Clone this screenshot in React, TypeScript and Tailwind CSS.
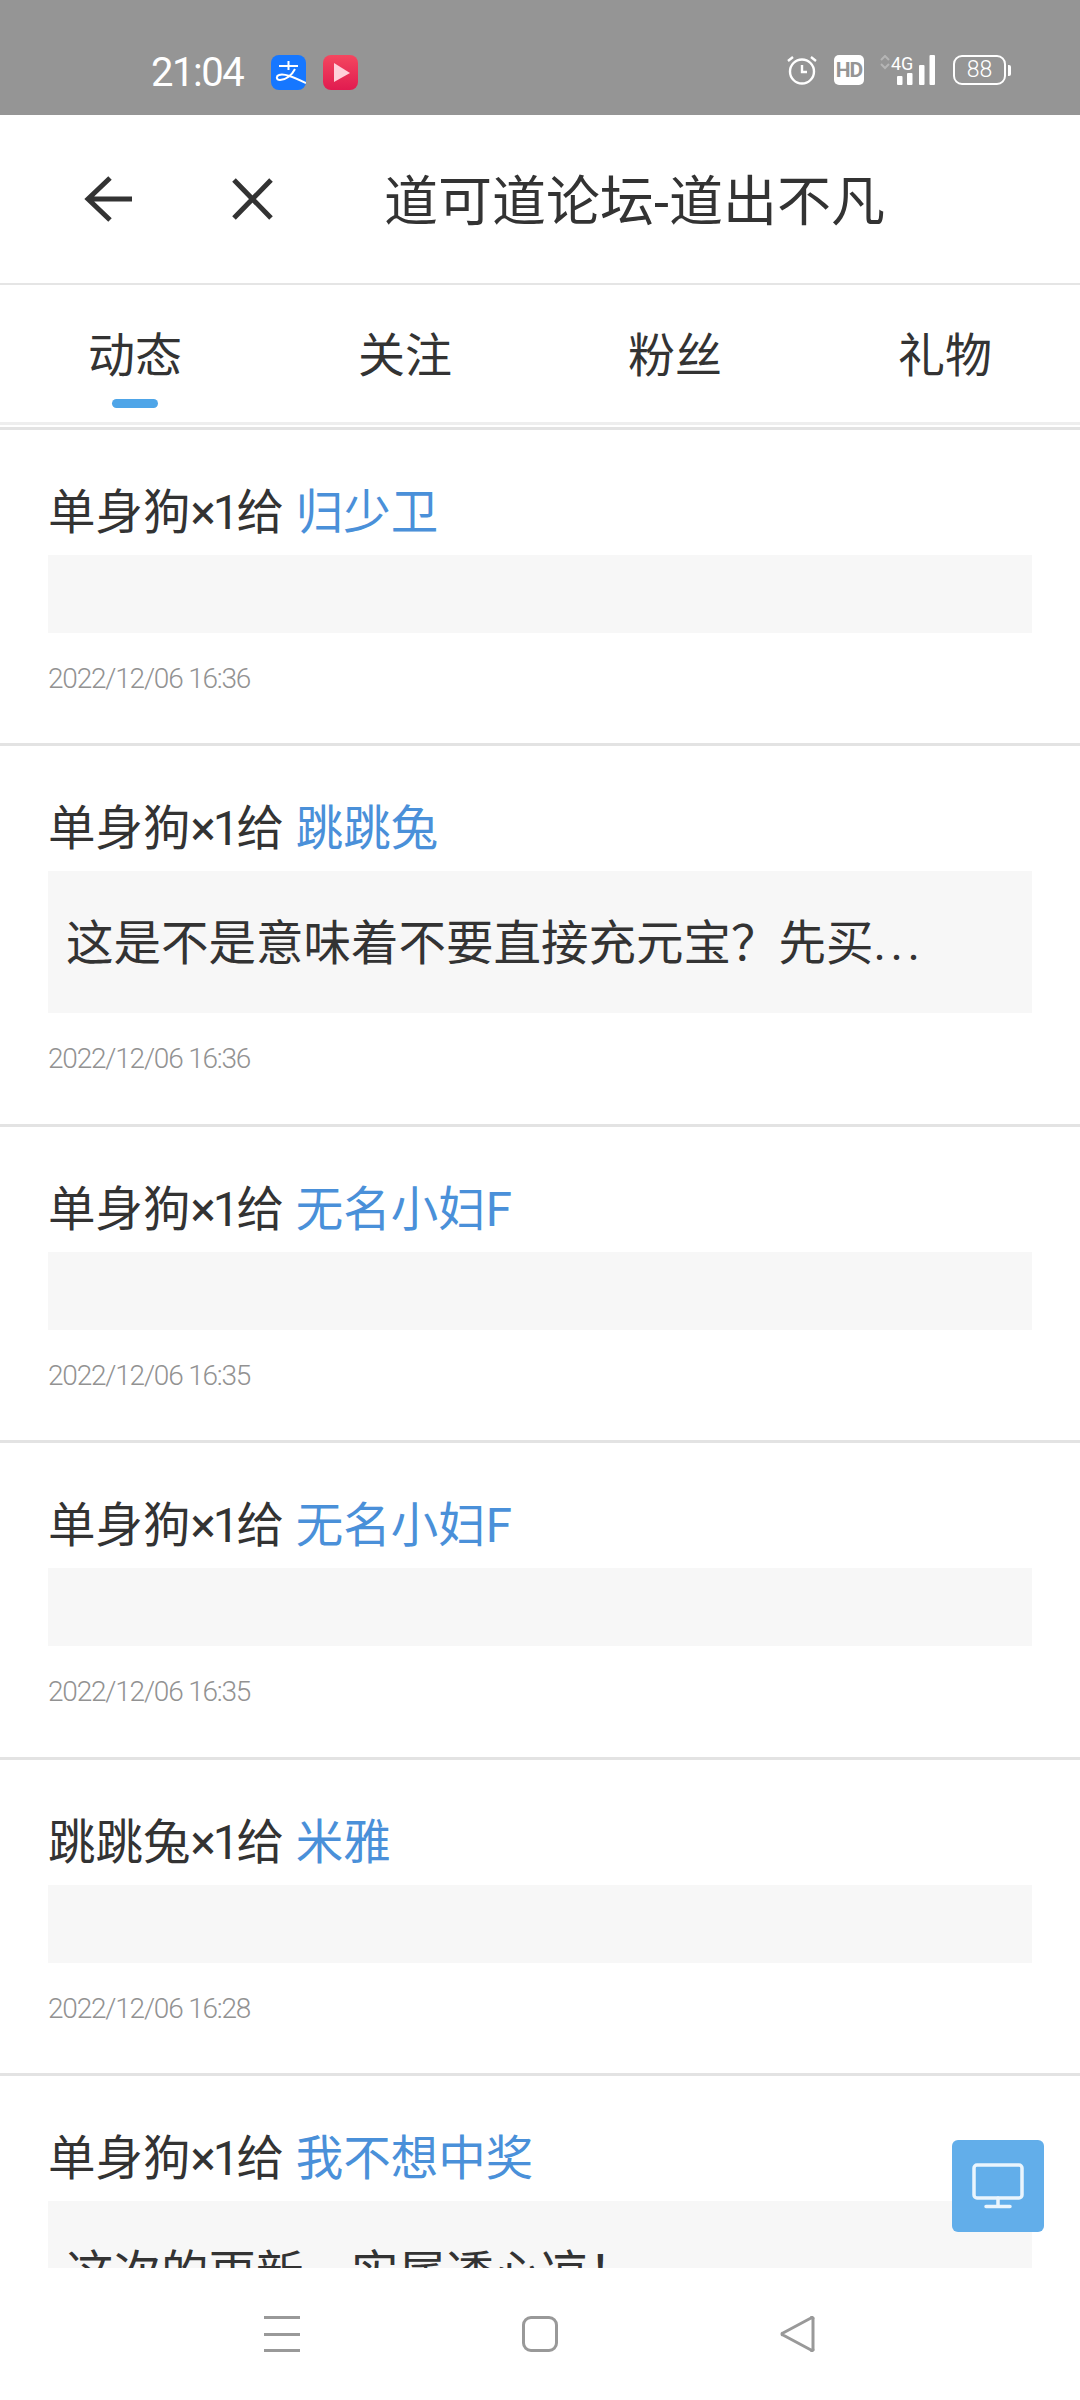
const tabs = ['动态', '关注', '粉丝', '礼物'];

const items = [
  { from: '单身狗', to: '归少卫', msg: '', time: '2022/12/06 16:36' },
  { from: '单身狗', to: '跳跳兔', msg: '这是不是意味着不要直接充元宝？先买', more: true, time: '2022/12/06 16:36' },
  { from: '单身狗', to: '无名小妇F', msg: '', time: '2022/12/06 16:35' },
  { from: '单身狗', to: '无名小妇F', msg: '', time: '2022/12/06 16:35' },
  { from: '跳跳兔', to: '米雅', msg: '', time: '2022/12/06 16:28' },
  { from: '单身狗', to: '我不想中奖', msg: '这次的更新，实属透心凉！' },
];

function StatusBar() {
  return (
    <div className="h-[115px] shrink-0 bg-[#959595] flex items-start pt-[55px] pl-[151px] pr-[69px] text-white">
      <span className="text-[40px] leading-[35px] w-[120px] tracking-[-1.5px]">21:04</span>
      <svg width="35" height="35" viewBox="0 0 35 35" className="mr-[17px]">
        <rect width="35" height="35" rx="8" fill="#1677ff" />
        <path d="M8 11h19M17.5 6v9M24 14c-3 6-9 11-15 11-4 0-4-4-1-5 5-2 14 2 27 8" fill="none" stroke="#fff" strokeWidth="2" />
      </svg>
      <svg width="35" height="35" viewBox="0 0 35 35">
        <defs>
          <linearGradient id="red" x1="0" y1="0" x2="0" y2="1">
            <stop offset="0" stopColor="#f4475f" />
            <stop offset="1" stopColor="#e11b50" />
          </linearGradient>
        </defs>
        <rect width="35" height="35" rx="8" fill="url(#red)" />
        <path d="M11 8l16 10-16 9z" fill="#ffd0da" />
      </svg>
      <div className="ml-auto flex items-start">
        <svg width="30" height="30" viewBox="0 0 30 30" fill="none" stroke="#fff" strokeWidth="2.4" className="mr-[17px]">
          <circle cx="15" cy="16.5" r="12" />
          <path d="M15 10v7h5M1 6l5-4M29 6l-5-4" />
        </svg>
        <div className="w-[30px] h-[30px] rounded-[5px] bg-white text-[#959595] text-[21px] leading-[30px] font-bold text-center tracking-[-1px] mr-[15px]">HD</div>
        <svg width="56" height="30" viewBox="0 0 56 30" className="mr-[18px]">
          <path d="M2 5l4-4 4 4M2 9l4 4 4-4" fill="none" stroke="#b5b5b5" strokeWidth="2" />
          <text x="12" y="15" fontSize="18" fill="#fff" fontFamily="Roboto, sans-serif">4G</text>
          <rect x="18" y="21" width="5.5" height="9" rx="1" fill="#fff" />
          <rect x="28" y="18" width="5.5" height="12" rx="1" fill="#fff" />
          <rect x="40" y="10" width="5.5" height="20" rx="1" fill="#fff" />
          <rect x="50.5" y="0" width="5.5" height="30" rx="1" fill="#fff" />
        </svg>
        <div className="w-[53px] h-[30px] rounded-[9px] border-[2.5px] border-white text-[23px] leading-[25px] text-center font-light">88</div>
        <div className="w-[3px] h-[11px] bg-white rounded-r-[2px] ml-[2px] mt-[10px]" />
      </div>
    </div>
  );
}

function Header() {
  return (
    <div className="h-[170px] shrink-0 bg-white border-b-2 border-[#e5e5e5] flex items-center text-[#333]">
      <svg width="48" height="48" viewBox="0 0 48 48" fill="none" stroke="#333" strokeWidth="5" className="ml-[84px]">
        <path d="M48 24H4M26 3L4 24l22 21" />
      </svg>
      <svg width="41" height="42" viewBox="0 0 41 42" fill="none" stroke="#333" strokeWidth="5" className="ml-[100px]">
        <path d="M2 2l37 38M39 2L2 40" />
      </svg>
      <span className="ml-[111px] mt-[8px] text-[54px] leading-none">道可道论坛-道出不凡</span>
    </div>
  );
}

function Tabs() {
  return (
    <div className="h-[145px] shrink-0 bg-white flex flex-col">
      <div className="flex flex-1">
        {tabs.map((tab, i) => (
          <div key={tab} className="w-[270px] relative flex justify-center pt-[44px] text-[47px] leading-[54px] text-[#333]">
            {tab}
            {i === 0 && <div className="absolute left-[112px] top-[114px] w-[46px] h-[9px] rounded-full bg-[#4ea5e8]" />}
          </div>
        ))}
      </div>
      <div className="h-[3px] bg-[#eeeeee]" />
      <div className="h-[2px]" />
      <div className="h-[3px] bg-[#e3e3e3]" />
    </div>
  );
}

export default function App() {
  return (
    <div className="relative w-[1080px] h-[2400px] overflow-hidden flex flex-col bg-white font-['Roboto','Noto_Sans_CJK_SC',sans-serif]">
      <StatusBar />
      <Header />
      <Tabs />
      <div className="flex-1 min-h-0 overflow-hidden">
        {items.map((item, i) => (
          <div key={i} className="border-b-[3px] border-[#e3e3e3] px-[48px] pt-[53px] pb-[49.4px]">
            <div className="text-[47.5px] leading-[60px] text-[#333]">
              {item.from}
              <span className="tracking-[-3px]">×1</span>
              给 <span className="text-[#4a90d9]">{item.to}</span>
            </div>
            <div className={'mt-[12px] bg-[#f7f7f7] px-[18px] text-[47.5px] text-[#333] ' + (item.msg ? 'h-[142px] leading-[146px]' : 'h-[78px]')}>
              {item.msg}
              {item.more && <span className="tracking-[4.5px]">...</span>}
            </div>
            {item.time && (
              <div className="mt-[31px] text-[28px] leading-[30px] text-[#929292] font-light tracking-[-1.2px]">{item.time}</div>
            )}
          </div>
        ))}
      </div>
      <div className="h-[132px] shrink-0 bg-white flex items-center justify-center gap-[222px]">
        <div className="w-[36px] h-[36px] flex flex-col justify-between">
          <div className="h-[3px] bg-[#999]" />
          <div className="h-[3px] bg-[#999]" />
          <div className="h-[3px] bg-[#999]" />
        </div>
        <div className="w-[36px] h-[36px] rounded-[9px] border-[3px] border-[#999]" />
        <svg width="36" height="36" viewBox="0 0 36 36" fill="none" stroke="#999" strokeWidth="3" strokeLinejoin="round">
          <path d="M33 3v30a1 1 0 0 1-2 1L3 19a1 1 0 0 1 0-2L31 2a1 1 0 0 1 2 1z" />
        </svg>
      </div>
      <div className="absolute left-[952px] top-[2140px] w-[92px] h-[92px] rounded-[6px] bg-[#62aeea] flex items-center justify-center">
        <svg width="52" height="46" viewBox="0 0 52 46" fill="none" stroke="#eaf5fd" strokeWidth="3.5" strokeLinecap="round">
          <rect x="2" y="2" width="48" height="33" rx="3" />
          <path d="M26 35v8M14 43.5h24" />
        </svg>
      </div>
    </div>
  );
}
